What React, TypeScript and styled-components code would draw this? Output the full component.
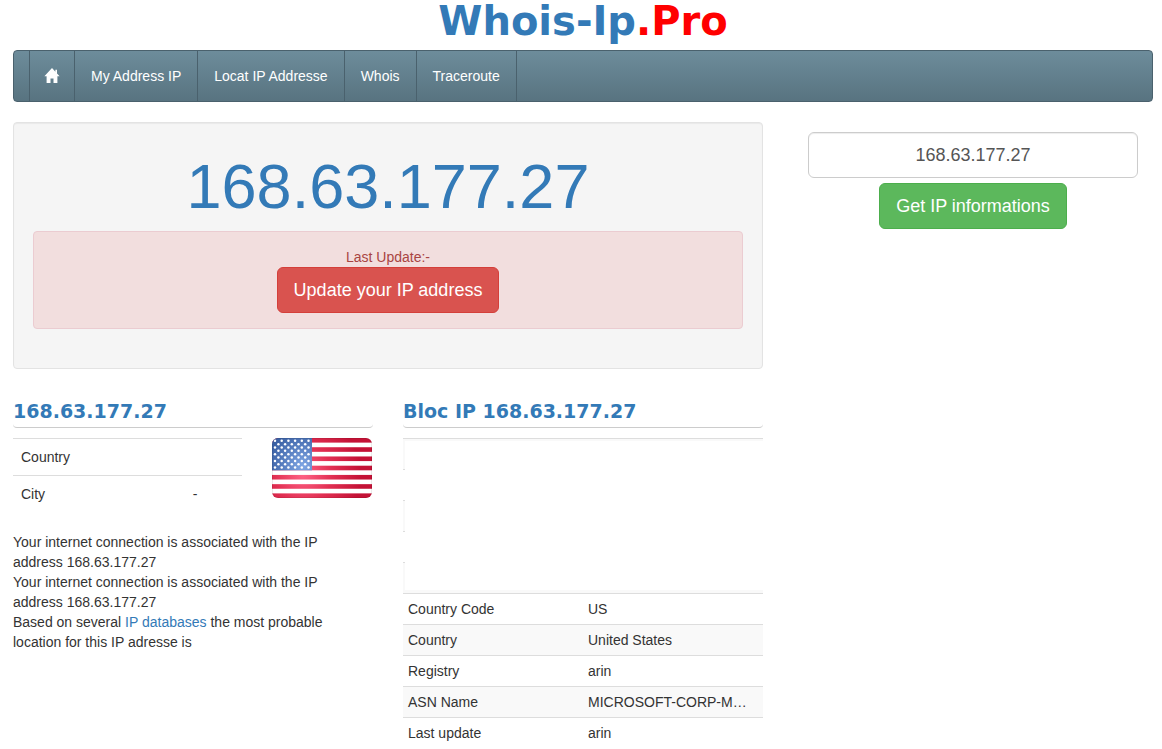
import React from "react";
import styled, { createGlobalStyle } from "styled-components";

const GlobalStyle = createGlobalStyle`
  *, *::before, *::after { box-sizing: border-box; }
  body {
    margin: 0;
    background: #fff;
    color: #333;
    font: 14px/20px "Liberation Sans", Arial, sans-serif;
  }
  a { color: #337ab7; text-decoration: none; }
`;

const display = `"DejaVu Sans", Verdana, sans-serif`;

const Page = styled.div`
  padding: 0 9px 0 13px;
`;

const Logo = styled.a`
  display: block;
  margin-bottom: 8px;
  text-align: center;
  font: bold 40px/42px ${display};
`;

const LogoAccent = styled.span`
  color: #f00;
`;

const NavBar = styled.nav`
  display: flex;
  height: 52px;
  margin-bottom: 20px;
  padding: 0 15px;
  border: 1px solid #4a616d;
  border-radius: 4px;
  background: linear-gradient(#6d8c9b, #587380);
`;

const NavLink = styled.a<{ $icon?: boolean }>`
  display: flex;
  align-items: center;
  padding: 0 ${(p) => (p.$icon ? 14 : 16)}px;
  border-left: 1px solid #4a616d;

  && { color: #fff; }

  &:last-child { border-right: 1px solid #4a616d; }
`;

const Columns = styled.div`
  display: grid;
  grid-template-columns: 25fr 12fr;
  gap: 30px;
`;

const Main = styled.main`
  min-width: 0;
`;

const Well = styled.section`
  margin-bottom: 20px;
  padding: 19px;
  border: 1px solid #e3e3e3;
  border-radius: 4px;
  background: #f5f5f5;
  box-shadow: inset 0 1px 1px rgba(0, 0, 0, 0.05);
  text-align: center;
`;

const Address = styled.h1`
  margin: 10px 0;
  color: #337ab7;
  font-size: 63px;
  font-weight: 500;
  line-height: 69px;
`;

const Alert = styled.div`
  margin-bottom: 20px;
  padding: 15px;
  border: 1px solid #ebccd1;
  border-radius: 4px;
  background: #f2dede;
  color: #a94442;
`;

const Button = styled.button<{ $tone: "danger" | "success" }>`
  height: 46px;
  padding: 0 16px;
  border: 1px solid ${(p) => (p.$tone === "danger" ? "#d43f3a" : "#4cae4c")};
  border-radius: 6px;
  background: ${(p) => (p.$tone === "danger" ? "#d9534f" : "#5cb85c")};
  color: #fff;
  font: 18px/24px "Liberation Sans", Arial, sans-serif;
  cursor: pointer;
`;

const AlertAction = styled.div`
  display: flex;
  justify-content: center;
`;

const Details = styled.div`
  display: grid;
  grid-template-columns: 1fr 1fr;
  gap: 30px;
`;

const Panel = styled.section`
  min-width: 0;
`;

const Heading = styled.h2`
  margin: 0 0 10px;
  padding: 10px 0 4px;
  border-bottom: 1px solid #ccc;
  border-radius: 4px;
  color: #337ab7;
  font: bold 19px/24px ${display};
`;

const Location = styled.div`
  display: flex;
  gap: 30px;
  align-items: flex-start;
  margin-bottom: 20px;
  padding-right: 1px;
`;

const Table = styled.table<{ $dense?: boolean }>`
  width: 100%;
  table-layout: fixed;
  border-spacing: 0;

  th, td {
    height: ${(p) => (p.$dense ? 31 : 37)}px;
    padding: ${(p) => (p.$dense ? 5 : 8)}px;
    border-top: 1px solid #ddd;
    font-weight: normal;
    text-align: left;
    vertical-align: top;
    white-space: nowrap;
  }

  th { width: ${(p) => (p.$dense ? 50 : 75)}%; }

  tr:nth-child(odd) > * {
    background: ${(p) => (p.$dense ? "#f9f9f9" : "transparent")};
  }
`;

const Flag = styled.svg`
  flex: none;
  width: 100px;
  height: 60px;
`;

const Notes = styled.div`
  max-width: 330px;

  p { margin: 0; }
`;

const BlockTable = styled.div`
  position: relative;
`;

const AdSlot = styled.div`
  position: absolute;
  top: 3px;
  left: 2px;
  right: 0;
  height: 149px;
  background: #fff;
`;

const Lookup = styled.form`
  display: flex;
  flex-direction: column;
  align-items: center;
  gap: 5px;
  padding: 10px 15px;
`;

const LookupInput = styled.input`
  width: 100%;
  height: 46px;
  padding: 10px 16px;
  border: 1px solid #ccc;
  border-radius: 6px;
  background: #fff;
  box-shadow: inset 0 1px 1px rgba(0, 0, 0, 0.075);
  color: #555;
  font: 18px/24px "Liberation Sans", Arial, sans-serif;
  text-align: center;
`;

const ip = "168.63.177.27";

const connectionNote = `Your internet connection is associated with the IP address ${ip}`;

const blockRows = [
  ["Country Code", "US"],
  ["Country", "United States"],
  ["Registry", "arin"],
  ["ASN Name", "MICROSOFT-CORP-M…"],
  ["Last update", "arin"],
];

function HomeIcon() {
  return (
    <svg width="16" height="16" viewBox="0 0 16 16" fill="#fff" aria-hidden="true">
      <path d="M8 0 .4 8.2h2.2V15h3.9v-4.6h3V15h3.9V8.2h2.2L13 5.4V1.8h-1.6v1.9z" />
    </svg>
  );
}

function UsFlag() {
  const stripe = 60 / 13;
  const stars = [];
  for (let row = 0; row < 9; row++) {
    const offset = row % 2 ? 6.4 : 3;
    const count = row % 2 ? 5 : 6;
    for (let col = 0; col < count; col++) {
      stars.push(
        <circle key={`${row}-${col}`} cx={offset + col * 6.7} cy={2.8 + row * 3.35} r="1.25" fill="#fff" />
      );
    }
  }
  return (
    <Flag viewBox="0 0 100 60" role="img" aria-label="United States">
      <defs>
        <clipPath id="flag-shape">
          <rect width="100" height="60" rx="6" />
        </clipPath>
        <radialGradient id="flag-red" gradientUnits="userSpaceOnUse" cx="31" cy="36" r="58">
          <stop offset="0" stopColor="#ff6286" />
          <stop offset="0.5" stopColor="#e12f52" />
          <stop offset="1" stopColor="#c41236" />
        </radialGradient>
        <radialGradient id="flag-blue" gradientUnits="userSpaceOnUse" cx="31" cy="28" r="36">
          <stop offset="0" stopColor="#7fa6e4" />
          <stop offset="1" stopColor="#3a60a4" />
        </radialGradient>
      </defs>
      <g clipPath="url(#flag-shape)">
        <rect width="100" height="60" fill="#fff" />
        {[0, 2, 4, 6, 8, 10, 12].map((n) => (
          <rect key={n} y={n * stripe} width="100" height={stripe} fill="url(#flag-red)" />
        ))}
        <rect width="40" height={stripe * 7} fill="url(#flag-blue)" />
        {stars}
      </g>
      <rect x="0.5" y="0.5" width="99" height="59" rx="5.5" fill="none" stroke="#000" strokeOpacity="0.08" />
    </Flag>
  );
}

export default function App() {
  return (
    <Page>
      <GlobalStyle />
      <Logo href="#">
        Whois-Ip<LogoAccent>.Pro</LogoAccent>
      </Logo>
      <NavBar>
        <NavLink href="#" aria-label="Home" $icon>
          <HomeIcon />
        </NavLink>
        <NavLink href="#">My Address IP</NavLink>
        <NavLink href="#">Locat IP Addresse</NavLink>
        <NavLink href="#">Whois</NavLink>
        <NavLink href="#">Traceroute</NavLink>
      </NavBar>
      <Columns>
        <Main>
          <Well>
            <Address>{ip}</Address>
            <Alert>
              Last Update:-
              <AlertAction>
                <Button type="button" $tone="danger">Update your IP address</Button>
              </AlertAction>
            </Alert>
          </Well>
          <Details>
            <Panel>
              <Heading>{ip}</Heading>
              <Location>
                <Table>
                  <tbody>
                    <tr>
                      <th scope="row">Country</th>
                      <td />
                    </tr>
                    <tr>
                      <th scope="row">City</th>
                      <td>-</td>
                    </tr>
                  </tbody>
                </Table>
                <UsFlag />
              </Location>
              <Notes>
                <p>{connectionNote}</p>
                <p>{connectionNote}</p>
                <p>
                  Based on several <a href="#">IP databases</a> the most probable location for this IP
                  adresse is
                </p>
              </Notes>
            </Panel>
            <Panel>
              <Heading>{`Bloc IP ${ip}`}</Heading>
              <BlockTable>
                <Table $dense>
                  <tbody>
                    {[0, 1, 2, 3, 4].map((n) => (
                      <tr key={n}>
                        <td />
                        <td />
                      </tr>
                    ))}
                    {blockRows.map(([label, value]) => (
                      <tr key={label}>
                        <th scope="row">{label}</th>
                        <td>{value}</td>
                      </tr>
                    ))}
                  </tbody>
                </Table>
                <AdSlot />
              </BlockTable>
            </Panel>
          </Details>
        </Main>
        <aside>
          <Lookup>
            <LookupInput type="text" aria-label="IP address" defaultValue={ip} />
            <Button type="button" $tone="success">Get IP informations</Button>
          </Lookup>
        </aside>
      </Columns>
    </Page>
  );
}
